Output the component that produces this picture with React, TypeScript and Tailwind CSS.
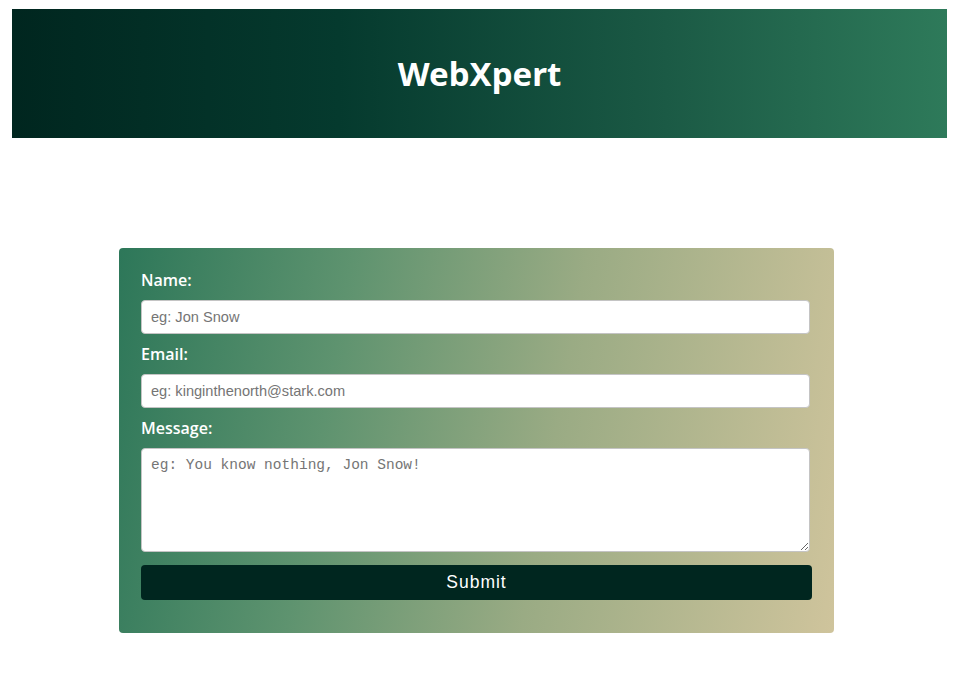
export default function App() {
  return (
    <div className="min-h-screen bg-white pt-[9px] font-['Open_Sans',sans-serif]">
      <header className="mx-[12px] flex h-[129px] items-center justify-center bg-[linear-gradient(90deg,#00261f_0%,#053a2e_35%,#1b5a45_70%,#2e7a5a_100%)]">
        <h1 className="text-[33px] font-bold text-white font-['Noto_Sans',sans-serif]">
          WebXpert
        </h1>
      </header>

      <form
        className="ml-[119px] mt-[110px] flex w-[715px] flex-col rounded-[4px] bg-[linear-gradient(100deg,#2d7759_0%,#5e936f_30%,#9aab84_60%,#cfc49c_100%)] px-[22px] pb-[33px] pt-[20px]"
        onSubmit={(e) => e.preventDefault()}
      >
        <label className="mb-[8px] text-[16px] font-semibold leading-[24px] text-white">Name:</label>
        <input
          type="text"
          placeholder="eg: Jon Snow"
          className="h-[34px] w-[669px] rounded-[4px] border border-[#c4c4c4] bg-white px-[9px] text-[14.6px] font-['Liberation_Sans',sans-serif] placeholder:text-[#757575]"
        />
        <label className="mb-[8px] mt-[8px] text-[16px] font-semibold leading-[24px] text-white">Email:</label>
        <input
          type="email"
          placeholder="eg: kinginthenorth@stark.com"
          className="h-[34px] w-[669px] rounded-[4px] border border-[#c4c4c4] bg-white px-[9px] text-[14.6px] font-['Liberation_Sans',sans-serif] placeholder:text-[#757575]"
        />
        <label className="mb-[8px] mt-[8px] text-[16px] font-semibold leading-[24px] text-white">Message:</label>
        <textarea
          placeholder="eg: You know nothing, Jon Snow!"
          className="h-[104px] w-[669px] rounded-[4px] border border-[#c4c4c4] bg-white px-[9px] py-[6px] text-[14.5px] leading-[20px] font-['Liberation_Mono',monospace] placeholder:text-[#757575]"
        />
        <button
          type="submit"
          className="mt-[13px] h-[35px] w-[671px] rounded-[4px] bg-[#00261f] text-[17.5px] tracking-[1px] text-white font-['Liberation_Sans',sans-serif]"
        >
          Submit
        </button>
      </form>
    </div>
  );
}
